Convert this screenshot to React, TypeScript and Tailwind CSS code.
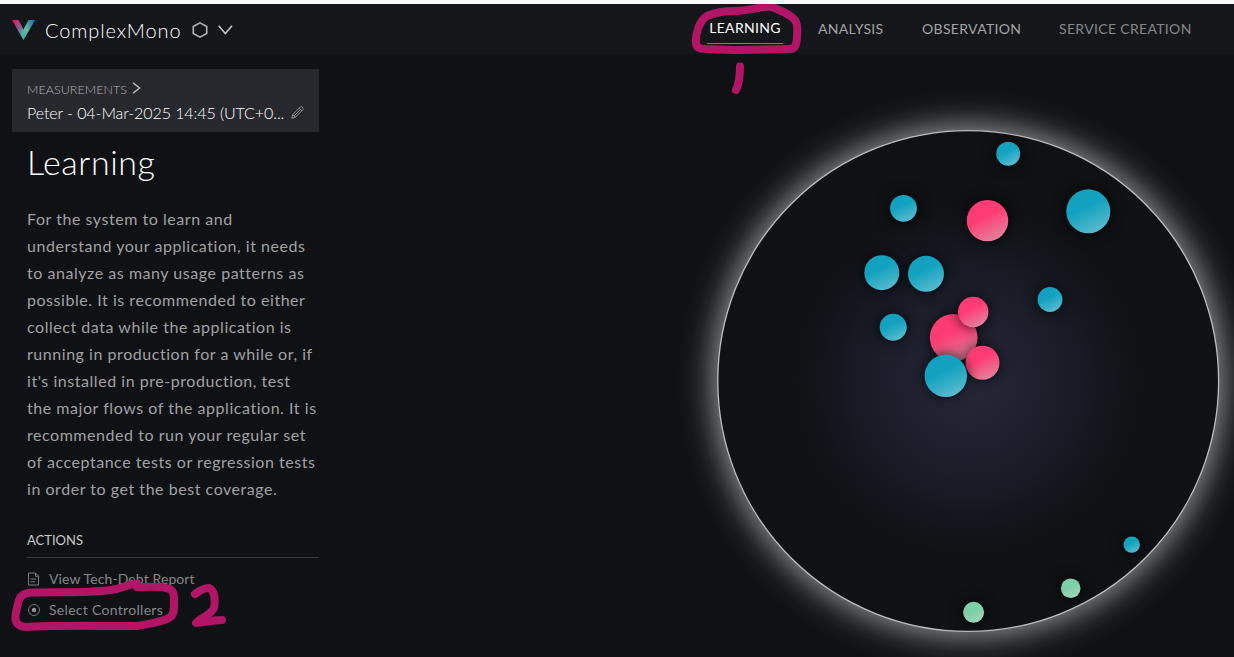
import React from "react";

const navItems = [
  { label: "ANALYSIS", className: "w-[66px] tracking-[0.3px] text-[#a3a4a6]" },
  { label: "OBSERVATION", className: "w-[99px] tracking-[0.33px] text-[#a3a4a6]" },
  { label: "SERVICE CREATION", className: "w-[133px] tracking-[0.33px] text-[#858688]" },
];

const bubbles = [
  { x: 1008.2, y: 153.7, r: 12, color: "blue" },
  { x: 903.5, y: 208.3, r: 13.4, color: "blue" },
  { x: 987.5, y: 220.6, r: 20.7, color: "pink" },
  { x: 1088.3, y: 211.3, r: 22, color: "blue" },
  { x: 881.8, y: 272.7, r: 17.5, color: "blue" },
  { x: 926, y: 273.8, r: 18, color: "blue" },
  { x: 1050, y: 299.5, r: 12.4, color: "blue" },
  { x: 893.2, y: 327.3, r: 13.5, color: "blue" },
  { x: 953.7, y: 337.7, r: 23.8, color: "pink" },
  { x: 973.2, y: 312, r: 15.2, color: "pink" },
  { x: 982.5, y: 362.8, r: 17, color: "pink" },
  { x: 945.8, y: 375.8, r: 21.2, color: "blue" },
  { x: 1131.7, y: 544.6, r: 8.2, color: "blue" },
  { x: 1070.7, y: 588.3, r: 9.8, color: "green" },
  { x: 973.6, y: 612.3, r: 10.5, color: "green" },
];

const Header: React.FC = () => {
  return (
    <header className="flex h-[50px] items-center justify-between bg-[#15161a] pl-3 pr-[42px]">
      <div className="flex items-center pt-[2px]">
        <svg width="23" height="20" viewBox="0 0 23 20">
          <defs>
            <linearGradient id="logoLeft" x1="0" y1="0" x2="0.7" y2="1">
              <stop offset="0.1" stopColor="#e0195c" />
              <stop offset="0.55" stopColor="#8c5c94" />
              <stop offset="0.9" stopColor="#4bb3a6" />
            </linearGradient>
            <linearGradient id="logoRight" x1="1" y1="0" x2="0.2" y2="1">
              <stop offset="0.05" stopColor="#1d6fb5" />
              <stop offset="0.6" stopColor="#66bd98" />
              <stop offset="1" stopColor="#3fa9a8" />
            </linearGradient>
          </defs>
          <path d="M0 0H6.6L11.6 10L11.5 20Z" fill="url(#logoLeft)" />
          <path d="M16.4 0H23L11.5 20L9.6 13Z" fill="url(#logoRight)" />
        </svg>
        <span className="ml-[10px] w-[137px] whitespace-nowrap text-[20px] font-light leading-6 tracking-[0.88px] text-white">
          ComplexMono
        </span>
        <svg className="ml-[10px]" width="16" height="16" viewBox="0 0 16 16" fill="none" stroke="#b4b5b7" strokeWidth="1.6">
          <path d="M8 0.9L14.7 4.5V11.5L8 15.1L1.3 11.5V4.5Z" />
        </svg>
        <svg className="ml-[10px]" width="15" height="10" viewBox="0 0 15 10" fill="none" stroke="#c9cacb" strokeWidth="1.5">
          <path d="M0.7 0.8L7.3 8.6L14 0.8" />
        </svg>
      </div>
      <nav className="flex items-center gap-[38px] whitespace-nowrap text-[14px] leading-5">
        <div className="-mr-[3px] mt-[4px] flex h-[26px] w-[76px] justify-center border-b border-[#12a5c4] tracking-[0.33px] text-white">
          LEARNING
        </div>
        {navItems.map((item) => (
          <span key={item.label} className={item.className}>
            {item.label}
          </span>
        ))}
      </nav>
    </header>
  );
};

const Sidebar: React.FC = () => {
  return (
    <aside className="w-[331px] shrink-0 pl-3 pt-[15px]">
      <div className="h-[63px] w-[307px] bg-[#27282d] pl-[15px] pt-[12px]">
        <div className="flex h-[17px] items-center text-[12.5px] leading-[17px] text-[#b4b5b8]">
          <span className="w-[105px] font-light tracking-[0.06px]">MEASUREMENTS</span>
          <svg className="-mt-[3px]" width="9" height="12" viewBox="0 0 9 12" fill="none" stroke="#c4c5c7" strokeWidth="1.3">
            <path d="M1 0.8L7.6 6L1 11.2" />
          </svg>
        </div>
        <div className="mt-1 flex h-[21px] items-center text-[16px] leading-[21px] text-white">
          <span className="w-[264px] whitespace-nowrap font-light tracking-[-0.08px]">
            Peter - 04-Mar-2025 14:45 (UTC+0...
          </span>
          <svg width="13" height="13" viewBox="0 0 13 13" fill="none" stroke="#97989b" strokeWidth="0.9">
            <path d="M0.8 12.2L1.7 8.6L9.4 0.9Q10.2 0.3 11 1L12 2Q12.7 2.8 12 3.6L4.3 11.3Z" />
            <path d="M8.2 2.2L10.8 4.8M3.2 9.8L9.2 3.8M1.7 8.6L4.3 11.3" />
          </svg>
        </div>
      </div>
      <div className="w-[307px] pl-[15px]">
        <h1 className="mt-[9px] text-[34px] font-light leading-[42px] tracking-[0.55px] text-white">Learning</h1>
        <p className="mt-[22px] whitespace-nowrap text-[16px] leading-[27px] tracking-[0.54px] text-[#a0a1a3]">
          For the system to learn and
          <br />
          understand your application, it needs
          <br />
          to analyze as many usage patterns as
          <br />
          possible. It is recommended to either
          <br />
          collect data while the application is
          <br />
          running in production for a while or, if
          <br />
          it's installed in pre-production, test
          <br />
          the major flows of the application. It is
          <br />
          recommended to run your regular set
          <br />
          of acceptance tests or regression tests
          <br />
          in order to get the best coverage.
        </p>
        <h2 className="mt-[28px] h-[28px] border-b border-[#393a3d] text-[13px] leading-[20px] text-[#c7c8ca]">ACTIONS</h2>
        <ul className="mt-[11px] flex flex-col gap-[11px] text-[14px] leading-5 text-[#858689]">
          <li className="flex items-center">
            <svg width="22" height="14" viewBox="0 0 22 14" fill="none" stroke="#7c7d80">
              <path d="M1.5 1H8.5L11.5 4V13H1.5Z" />
              <path d="M8.5 1V4.3H11.5M3.5 7H9M3.5 9.8H8" />
            </svg>
            <span className="tracking-[0.1px]">View Tech-Debt Report</span>
          </li>
          <li className="flex items-center">
            <svg width="22" height="14" viewBox="0 0 22 14" fill="none">
              <circle cx="7" cy="7" r="5.5" stroke="#737477" />
              <circle cx="7" cy="7" r="2.2" fill="#929396" />
            </svg>
            <span className="tracking-[0.3px]">Select Controllers</span>
          </li>
        </ul>
      </div>
    </aside>
  );
};

const BubbleChart: React.FC = () => {
  return (
    <svg className="h-[603px] w-[903px] shrink-0" viewBox="331 54 903 603">
      <defs>
        <radialGradient id="halo" gradientUnits="userSpaceOnUse" cx="968.2" cy="381" r="292">
          <stop offset="0.858" stopColor="#fff" stopOpacity="0.34" />
          <stop offset="0.88" stopColor="#fff" stopOpacity="0.25" />
          <stop offset="0.905" stopColor="#fff" stopOpacity="0.15" />
          <stop offset="0.93" stopColor="#fff" stopOpacity="0.075" />
          <stop offset="0.96" stopColor="#fff" stopOpacity="0.025" />
          <stop offset="1" stopColor="#fff" stopOpacity="0" />
        </radialGradient>
        <radialGradient id="core" gradientUnits="userSpaceOnUse" cx="968.2" cy="381" r="176">
          <stop offset="0" stopColor="#27293a" />
          <stop offset="0.75" stopColor="#151720" />
          <stop offset="1" stopColor="#101114" />
        </radialGradient>
        <linearGradient id="blue" x1="0.25" y1="0" x2="0.75" y2="1">
          <stop offset="0.4" stopColor="#12a2bf" />
          <stop offset="1" stopColor="#5fbdd0" />
        </linearGradient>
        <linearGradient id="pink" x1="0.25" y1="0" x2="0.75" y2="1">
          <stop offset="0.4" stopColor="#ff3d74" />
          <stop offset="1" stopColor="#e0879f" />
        </linearGradient>
        <linearGradient id="green" x1="0.25" y1="0" x2="0.75" y2="1">
          <stop offset="0.4" stopColor="#7dcfa7" />
          <stop offset="1" stopColor="#a2d6bd" />
        </linearGradient>
        <filter id="shadow" x="-150%" y="-150%" width="400%" height="400%" colorInterpolationFilters="sRGB">
          <feDropShadow dx="0" dy="0" stdDeviation="7" floodColor="#000" floodOpacity="0.8" />
        </filter>
      </defs>
      <circle cx="968.2" cy="381" r="292" fill="url(#halo)" />
      <circle cx="968.2" cy="381" r="250.4" fill="url(#core)" stroke="#bdbdbd" strokeWidth="1.3" />
      {bubbles.map((b) => (
        <circle key={`${b.x}-${b.y}`} cx={b.x} cy={b.y} r={b.r} fill={`url(#${b.color})`} filter="url(#shadow)" />
      ))}
    </svg>
  );
};

// hand-drawn step markers laid over the page
const Markers: React.FC = () => {
  return (
    <svg
      className="pointer-events-none absolute left-0 top-0"
      width="1234"
      height="657"
      viewBox="0 0 1234 657"
      fill="none"
      stroke="#b31566"
      strokeWidth="8"
      strokeLinecap="round"
      strokeLinejoin="round"
    >
      <path d="M769 6.5C761 7 750 10 737 11C726 10.5 714 13 707 16C700 20 695 34 696 43C696 47 699 49 706 49L735 50L790 49C796 49 797 43 797 36C798 27 797 22 794 19C790 15 784 12 779 10Q773 7 769 6.5Z" />
      <path d="M740 66.5C740 77 739 84 736 90" />
      <path d="M137 583.5C129 584 120 589 111 590C90 593 60 592 36 592.5C27 592 21 594 19 600C17 607 15 614 15.5 619C16 624 20 627 26 627C50 625 100 626 137 626C148 624 162 622 169 618C175 615 174 607 174 600C174 593 173 589 166 588C157 586 146 587 137 587" />
      <path d="M195 594C199 591 205 588 209 588C216 591 215 604 214 608C211 615 200 618 196 623C204 623 211 620 222 620" />
    </svg>
  );
};

const App: React.FC = () => {
  return (
    <div className="relative h-[657px] w-[1234px] overflow-hidden border-t-4 border-[#f7f7f7] bg-[#101114] font-['Lato',sans-serif]">
      <Header />
      <main className="flex">
        <Sidebar />
        <BubbleChart />
      </main>
      <div className="absolute -top-1 left-0">
        <Markers />
      </div>
    </div>
  );
};

export default App;
